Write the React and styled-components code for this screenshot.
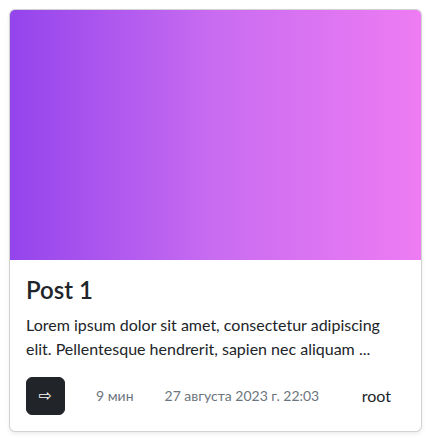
import styled, { createGlobalStyle } from 'styled-components';

const GlobalStyle = createGlobalStyle`
    body {
        margin: 0;
        font-family: Lato, "Noto Sans", sans-serif;
        color: #212529;
        background: #fff;
    }
`

const post = {
    title: "Post 1",
    text: "Lorem ipsum dolor sit amet, consectetur adipiscing elit. Pellentesque hendrerit, sapien nec aliquam ...",
    readTime: "9 мин",
    date: "27 августа 2023 г. 22:03",
    author: "root"
}

const App = () => {
    return (
        <Page>
            <GlobalStyle/>
            <Card>
                <Cover/>
                <CardBody>
                    <Title>{post.title}</Title>
                    <Text>{post.text}</Text>
                    <Footer>
                        <OpenButton type="button">⇨</OpenButton>
                        <Meta>{post.readTime}</Meta>
                        <Meta>{post.date}</Meta>
                        <Author>{post.author}</Author>
                    </Footer>
                </CardBody>
            </Card>
        </Page>
    );
}

export default App;

const Page = styled.div`
    padding: 9px;
`

const Card = styled.div`
    display: flex;
    flex-direction: column;
    border: 1px solid rgba(0,0,0,0.175);
    border-radius: 6px;
    box-shadow: 0 2px 4px rgba(0,0,0,0.075);
    overflow: hidden;
    background: #fff;
`

const Cover = styled.div`
    height: 250px;
    background: linear-gradient(to right, #9444ec, #c96cf1 50%, #ee7cf3);
`

const CardBody = styled.div`
    padding: 16px;
`

const Title = styled.h2`
    margin: 0 0 8px;
    font-size: 24px;
    font-weight: 600;
    line-height: 1.2;
`

const Text = styled.p`
    margin: 0 0 16px;
    font-size: 16px;
    line-height: 24px;
`

const Footer = styled.div`
    display: flex;
    align-items: center;
`

const OpenButton = styled.button`
    height: 38px;
    width: 39px;
    padding: 0;
    border: 1px solid #212529;
    border-radius: 6px;
    background: #212529;
    color: #fff;
    font-family: "DejaVu Sans", sans-serif;
    font-size: 16px;
    line-height: 24px;
    cursor: pointer;
`

const Meta = styled.span`
    margin-left: 31px;
    font-size: 14px;
    color: #6c757d;
`

const Author = styled.span`
    margin-left: auto;
    margin-right: 14px;
    font-size: 16px;
`
